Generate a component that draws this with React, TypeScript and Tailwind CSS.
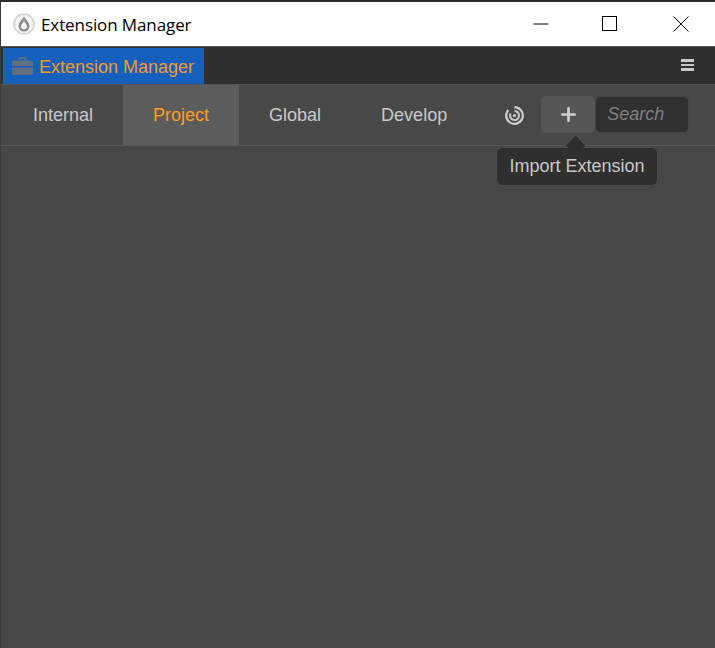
import React from 'react';
import { Plus } from 'lucide-react';

const tabs = ['Internal', 'Project', 'Global', 'Develop'];

const AppLogo = () => (
  <svg width="22" height="22" viewBox="0 0 22 22">
    <circle cx="11" cy="11" r="10" fill="#f6f6f6" stroke="#cfcfcf" strokeWidth="1.500" />
    <path d="M11 3.500C9 7 5.500 9.500 5.500 13a5.500 5.500 0 0 0 11 0C16.500 9.500 13 7 11 3.500Z" fill="#8c8c8c" />
    <path d="M11 8C10 10 8 11.500 8 13.300a3 3 0 0 0 6 0C14 11.500 12 10 11 8Z" fill="#f6f6f6" />
  </svg>
);

const Briefcase = () => (
  <svg width="21" height="18" viewBox="0 0 21 18" fill="#636f80">
    <path d="M6.500 3.500V2A2 2 0 0 1 8.500 0h4a2 2 0 0 1 2 2v1.500h-2V2h-4v1.500Z" />
    <path d="M2 3.500h17a2 2 0 0 1 2 2V9H0V5.500a2 2 0 0 1 2-2Z" />
    <path d="M0 10.500h21V16a2 2 0 0 1-2 2H2a2 2 0 0 1-2-2Z" />
  </svg>
);

const RadarIcon = () => (
  <svg width="19" height="19" viewBox="0 0 19 19" fill="none" stroke="#cfcfcf" strokeWidth="2.200">
    <path d="M9.500 1.200A8.300 8.300 0 1 1 3.300 4" />
    <path d="M9.500 5A4.500 4.500 0 1 1 5.500 7.500" stroke="#c4c4c4" />
    <circle cx="9.500" cy="9.500" r="1.600" fill="#cfcfcf" stroke="none" />
    <path d="M9.500 0.500v6" stroke="#a87868" strokeWidth="0.800" />
  </svg>
);

export default function App() {
  return (
    <div className="w-[715px] h-[648px] overflow-hidden flex flex-col bg-[#3a3a3a] font-['Liberation_Sans',sans-serif]">
      <div className="h-[2px] bg-[#2b2b2b]" />

      {/* window title bar */}
      <div className="h-[44px] ml-px bg-white flex items-center">
        <div className="ml-[12px] flex items-center">
          <AppLogo />
        </div>
        <span className="ml-[6px] text-[17px] text-black font-['Open_Sans',sans-serif] leading-none tracking-[-0.1px]">Extension Manager</span>
        <div className="ml-auto flex items-center">
          <svg width="16" height="16" viewBox="0 0 16 16" className="mr-[53px]" stroke="#000" fill="none">
            <path d="M0.500 8h15" />
          </svg>
          <svg width="16" height="16" viewBox="0 0 16 16" className="mr-[55px]" stroke="#000" fill="none">
            <rect x="0.500" y="0.500" width="14" height="14" />
          </svg>
          <svg width="16" height="16" viewBox="0 0 16 16" className="mr-[26px]" stroke="#000" fill="none">
            <path d="M0.500 0.500l15 15M15.500 0.500l-15 15" />
          </svg>
        </div>
      </div>

      <div className="flex-1 ml-px flex flex-col border-t border-[#555] bg-[#474747]">
        {/* panel header */}
        <div className="h-[38px] pl-[2px] pt-px flex items-start bg-[#2f2f2f] border-b border-[#555]">
          <div className="h-[36px] w-[201px] bg-[#1560bd] flex items-center pl-[9px]">
            <Briefcase />
            <span className="ml-[6px] mt-[2px] text-[18px] text-[#f39a25] leading-none">Extension Manager</span>
          </div>
          <div className="ml-auto mr-[21px] mt-[11px] flex flex-col gap-[2px]">
            <div className="w-[13px] h-[2.500px] bg-[#c8c8c8]" />
            <div className="w-[13px] h-[2.500px] bg-[#c8c8c8]" />
            <div className="w-[13px] h-[2.500px] bg-[#c8c8c8]" />
          </div>
        </div>

        {/* tabs row */}
        <div className="h-[61px] flex items-stretch pl-[2px] border-b border-[#575757] bg-[#484848] relative">
          {tabs.map((t) => (
            <div
              key={t}
              className={
                t === 'Project'
                  ? 'h-[60px] px-[30px] flex items-center text-[18px] text-[#ff9d1c] bg-[#5c5c5c]'
                  : 'h-[60px] px-[30px] flex items-center text-[18px] text-[#c8c8c8]'
              }
            >
              {t}
            </div>
          ))}
          <div className="ml-[28px] flex items-center">
            <RadarIcon />
          </div>
          <div className="ml-[17px] mb-[2px] flex items-center">
            <div className="w-[54px] h-[37px] rounded-[5px] bg-[#565656] flex items-center justify-center">
              <Plus size={21} strokeWidth={3} color="#d2d2d2" />
            </div>
            <div className="w-[94px] h-[37px] rounded-[6px] bg-[#303030] border border-[#444] pl-[11px] flex items-center text-[18px] italic text-[#808080]">
              Search
            </div>
          </div>

          {/* tooltip */}
          <div className="absolute left-[495px] top-[62px] w-[162px] h-[39px] rounded-[6px] bg-[#2f2f2f] border border-[#4c4c4c] flex items-center justify-center text-[18px] text-[#c8c8c8]">
            <div className="absolute left-[71px] top-[-11px] w-[15px] h-[15px] rotate-45 bg-[#2f2f2f] border-l border-t border-[#5c5c5c]" />
            <span className="relative">Import Extension</span>
          </div>
        </div>

        <div className="flex-1 bg-[#474747]" />
      </div>
    </div>
  );
}
